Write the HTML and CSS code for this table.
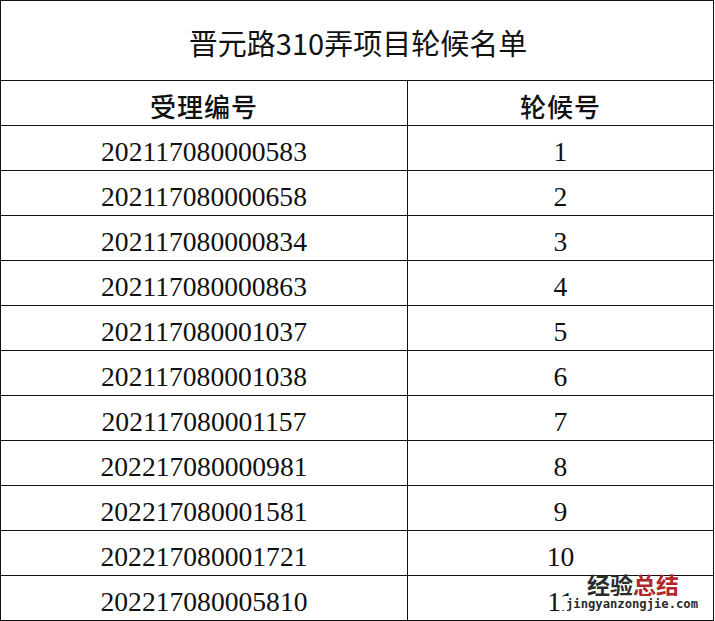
FILE: index.html
```html
<!DOCTYPE html>
<html lang="zh-CN">
<head>
<meta charset="utf-8">
<title>晋元路310弄项目轮候名单</title>
<link rel="stylesheet" href="styles.css">
</head>
<body>
<div class="sheet">
  <div class="grid">
    <div class="cell title">晋元路310弄项目轮候名单</div>
    <div class="cell head">受理编号</div>
    <div class="cell head">轮候号</div>
    <div class="cell num">202117080000583</div><div class="cell num">1</div>
    <div class="cell num">202117080000658</div><div class="cell num">2</div>
    <div class="cell num">202117080000834</div><div class="cell num">3</div>
    <div class="cell num">202117080000863</div><div class="cell num">4</div>
    <div class="cell num">202117080001037</div><div class="cell num">5</div>
    <div class="cell num">202117080001038</div><div class="cell num">6</div>
    <div class="cell num">202117080001157</div><div class="cell num">7</div>
    <div class="cell num">202217080000981</div><div class="cell num">8</div>
    <div class="cell num">202217080001581</div><div class="cell num">9</div>
    <div class="cell num">202217080001721</div><div class="cell num">10</div>
    <div class="cell num">202217080005810</div><div class="cell num">11</div>
  </div>
  <div class="watermark">
    <div class="wm-cn"><span class="wm-dark">经验</span><span class="wm-red">总结</span></div>
    <div class="wm-url">jingyanzongjie.com</div>
  </div>
</div>
</body>
</html>
```
FILE: styles.css
```css
html, body {
  margin: 0;
  padding: 0;
  background: #fff;
}
.sheet {
  position: relative;
  width: 715px;
  height: 621px;
  overflow: hidden;
}
.grid {
  display: grid;
  grid-template-columns: 407px 306px;
  grid-template-rows: 80px repeat(12, 45px);
  width: 714px;
  box-sizing: border-box;
  border-left: 1px solid #111;
  border-top: 1px solid #111;
}
.cell {
  box-sizing: border-box;
  border-right: 1px solid #111;
  border-bottom: 1px solid #111;
  display: flex;
  align-items: center;
  justify-content: center;
  color: #111;
  white-space: nowrap;
}
.title {
  grid-column: 1 / 3;
  font-family: "Noto Sans CJK SC", sans-serif;
  font-size: 29px;
  padding-top: 3px;
  padding-left: 2px;
}
.head {
  font-family: "Noto Sans CJK SC", sans-serif;
  font-size: 26px;
  font-weight: 500;
  letter-spacing: 1px;
  padding-top: 4px;
}
.num {
  font-family: "Liberation Serif", "Times New Roman", serif;
  font-size: 27.6px;
  padding-top: 8px;
}
.watermark {
  position: absolute;
  left: 563px;
  top: 572px;
  width: 138px;
  display: flex;
  flex-direction: column;
  align-items: center;
}
.wm-cn {
  font-family: "Noto Sans CJK SC", sans-serif;
  font-weight: 700;
  font-size: 23px;
  line-height: 24px;
  margin-left: 2px;
}
.wm-dark { color: #2b2b2b; }
.wm-red { color: #b0282c; }
.wm-url {
  background: #fff;
  font-family: "DejaVu Sans Mono", monospace;
  font-weight: 700;
  font-size: 12.2px;
  line-height: 17px;
  color: #2b2b2b;
  padding: 0 2px;
}
```
